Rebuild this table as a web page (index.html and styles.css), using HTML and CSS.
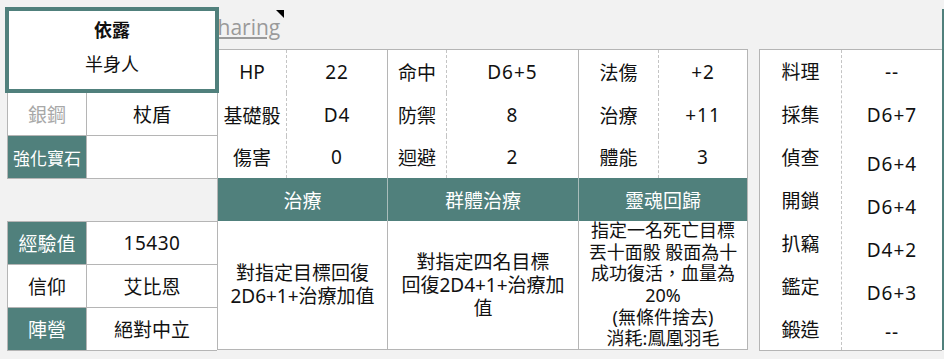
FILE: index.html
```html
<!DOCTYPE html>
<html lang="zh-Hant">
<head>
<meta charset="UTF-8" />
<meta name="viewport" content="width=device-width, initial-scale=1" />
<title>依露 - 角色卡</title>
<link rel="stylesheet" href="styles.css">
</head>
<body>
  <div class="sheet">
    <!-- Left: name plate, gear, experience -->
    <aside class="side">
      <div class="nameplate">
        <div class="char-name">依露</div>
        <div class="char-race">半身人</div>
      </div>
      <div class="kv">
        <div class="kv-row">
          <div class="kv-key muted">銀鋼</div>
          <div class="kv-val">杖盾</div>
        </div>
        <div class="kv-row">
          <div class="kv-key filled small">強化寶石</div>
          <div class="kv-val"></div>
        </div>
      </div>
      <div class="kv kv-lower">
        <div class="kv-row">
          <div class="kv-key filled">經驗值</div>
          <div class="kv-val num">15430</div>
        </div>
        <div class="kv-row">
          <div class="kv-key">信仰</div>
          <div class="kv-val">艾比恩</div>
        </div>
        <div class="kv-row">
          <div class="kv-key filled">陣營</div>
          <div class="kv-val">絕對中立</div>
        </div>
      </div>
    </aside>

    <!-- Middle: combat stats and spells -->
    <section class="main">
      <div class="share-bar">
        <a class="share-link" href="#">Sharing</a>
      </div>
      <div class="board">
        <div class="stats">
          <div class="st-key">HP</div><div class="st-val">22</div>
          <div class="st-key">命中</div><div class="st-val">D6+5</div>
          <div class="st-key">法傷</div><div class="st-val last">+2</div>

          <div class="st-key">基礎骰</div><div class="st-val">D4</div>
          <div class="st-key">防禦</div><div class="st-val">8</div>
          <div class="st-key">治療</div><div class="st-val last">+11</div>

          <div class="st-key">傷害</div><div class="st-val">0</div>
          <div class="st-key">迴避</div><div class="st-val">2</div>
          <div class="st-key">體能</div><div class="st-val last">3</div>
        </div>
        <div class="spells">
          <div class="spell-head">治療</div>
          <div class="spell-head">群體治療</div>
          <div class="spell-head last">靈魂回歸</div>
          <div class="spell-body">對指定目標回復<br>2D6+1+治療加值</div>
          <div class="spell-body">對指定四名目標<br>回復2D4+1+治療加<br>值</div>
          <div class="spell-body last dense">指定一名死亡目標<br>丟十面骰 骰面為十<br>成功復活，血量為<br>20%<br>(無條件捨去)<br>消耗:鳳凰羽毛</div>
        </div>
      </div>
    </section>

    <!-- Right: skills -->
    <section class="skills">
      <div class="skill-col skill-keys">
        <div>料理</div>
        <div>採集</div>
        <div>偵查</div>
        <div>開鎖</div>
        <div>扒竊</div>
        <div>鑑定</div>
        <div>鍛造</div>
      </div>
      <div class="skill-col skill-vals">
        <div class="sv">--</div>
        <div class="sv">D6+7</div>
        <div class="sv tall">D6+4</div>
        <div class="sv">D6+4</div>
        <div class="sv">D4+2</div>
        <div class="sv">D6+3</div>
        <div class="sv end">--</div>
      </div>
    </section>

    <div class="next-card"></div>
  </div>
</body>
</html>
```

FILE: styles.css
```css
/* Base */
* {
  box-sizing: border-box;
}
body {
  margin: 0;
  background: #f2f2f2;
  color: #111;
  font-family: "Noto Sans", "Noto Sans CJK TC", sans-serif;
  font-size: 19px;
}
.sheet {
  display: flex;
  align-items: flex-start;
  padding-left: 7px;
  height: 359px;
}

/* Left column */
.side {
  width: 210px;
  flex-shrink: 0;
  padding-top: 7px;
}
.nameplate {
  position: relative;
  z-index: 2;
  height: 86px;
  margin: 0 -2px;
  border: 4px solid #50807c;
  background: #fff;
  text-align: center;
  padding-top: 6px;
}
.char-name {
  font-weight: 700;
  font-size: 18px;
  line-height: 26px;
}
.char-race {
  font-size: 18px;
  line-height: 26px;
  margin-top: 8px;
}
.kv {
  border-left: 1px solid #b5b5b5;
  background: #fff;
}
.kv-lower {
  margin-top: 42px;
  border-top: 1px solid #b5b5b5;
}
.kv-row {
  display: flex;
  height: 43px;
  border-bottom: 1px solid #b5b5b5;
}
.kv-key {
  width: 79px;
  border-right: 1px solid #b5b5b5;
  display: flex;
  align-items: center;
  justify-content: center;
}
.kv-val {
  flex: 1;
  display: flex;
  align-items: center;
  justify-content: center;
}
.kv-val.num {
  letter-spacing: 0.5px;
}
.kv-key.muted {
  color: #a8a8a8;
}
.kv-key.filled {
  background: #50807c;
  color: #fff;
}
.kv-key.small {
  font-size: 17px;
}

/* Middle column */
.main {
  flex-shrink: 0;
  width: 531px;
}
.share-bar {
  height: 49px;
  position: relative;
}
.share-link {
  position: absolute;
  left: -11px;
  top: 13px;
  font-family: "Open Sans", sans-serif;
  font-size: 21px;
  line-height: 28px;
  color: #9a9a9a;
  text-decoration: underline;
  text-underline-offset: 2px;
}
/* little corner marker on the share button */
.share-link::after {
  content: "";
  position: absolute;
  right: -4px;
  top: -3px;
  border-top: 8px solid #000;
  border-left: 8px solid transparent;
}
.board {
  border: 1px solid #b5b5b5;
  background: #fff;
}
.stats {
  display: grid;
  grid-template-columns: 69px 101px 59px 132px 80px 88px;
  grid-template-rows: 43px 43px 42px;
}
.st-key,
.st-val {
  display: flex;
  align-items: center;
  justify-content: center;
}
.st-key {
  border-right: 1px dashed #c4c4c4;
}
.st-val {
  border-right: 1px solid #b5b5b5;
  letter-spacing: 1px;
}
.st-val.last {
  border-right: none;
}
.spells {
  display: grid;
  grid-template-columns: 170px 191px 168px;
  grid-template-rows: 43px 128px;
}
.spell-head {
  background: #50807c;
  color: #fff;
  display: flex;
  align-items: center;
  justify-content: center;
  border-right: 1px solid #a9bdbb;
}
.spell-body {
  border-right: 1px solid #b5b5b5;
  display: flex;
  align-items: center;
  justify-content: center;
  text-align: center;
  font-size: 19px;
  line-height: 23px;
}
.spell-head.last,
.spell-body.last {
  border-right: none;
}
.spell-body.dense {
  font-size: 18px;
  line-height: 21.6px;
}

/* Right column */
.skills {
  flex-shrink: 0;
  width: 183px;
  margin: 49px 0 0 11px;
  height: 302px;
  display: flex;
  background: #fff;
  border-top: 1px solid #b5b5b5;
  border-left: 1px solid #b5b5b5;
  border-bottom: 1px solid #b5b5b5;
}
.skill-col {
  display: flex;
  flex-direction: column;
}
.skill-keys {
  width: 82px;
  border-right: 1px dashed #c4c4c4;
}
.skill-keys div {
  flex: 1;
  display: flex;
  align-items: center;
  justify-content: center;
}
.skill-vals {
  flex: 1;
  letter-spacing: 1px;
}
.sv {
  height: 43px;
  display: flex;
  align-items: center;
  justify-content: center;
}
.sv.tall {
  height: 49px;
  padding-top: 6px;
}
.sv.end {
  flex: 1;
}

/* edge of the neighbouring card */
.next-card {
  width: 2px;
  height: 341px;
  margin-top: 9px;
  background: #50807c;
}
```
